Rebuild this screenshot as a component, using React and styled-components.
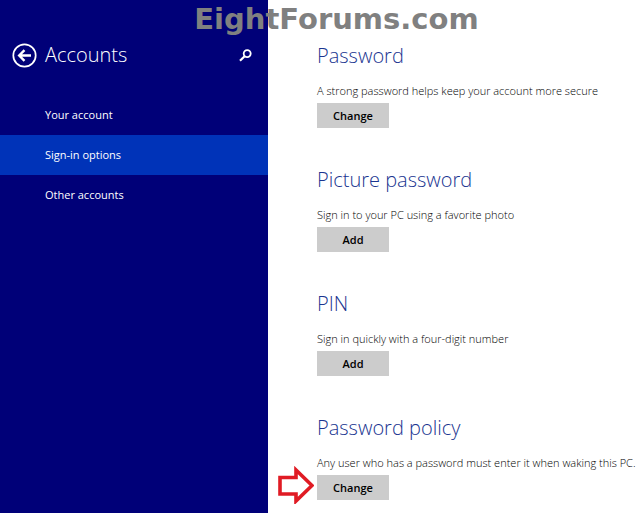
import React from "react";
import { useState } from "react";
import styled, { createGlobalStyle } from "styled-components";


const GlobalStyle = createGlobalStyle`
  * {
    box-sizing: border-box;
  }
  body {
    margin: 0;
    background: #fff;
    font-family: "Open Sans", "Noto Sans", sans-serif;
    font-size: 11px;
  }
`;


const Page = styled.div`
  position: relative;
  display: flex;
  min-height: 100vh;
  overflow: hidden;
`;


const Watermark = styled.div`
  position: absolute;
  top: 0;
  left: 0;
  right: 0;
  padding-left: 32px;
  text-align: center;
  color: #808080;
  font: bold 29px/38px "DejaVu Sans", sans-serif;
  pointer-events: none;
`;


const Sidebar = styled.aside`
  flex: 0 0 268px;
  padding-top: 40px;
  background: #000078;
  color: #fff;
`;


const SidebarHeader = styled.header`
  display: flex;
  align-items: center;
  height: 30px;
  padding: 0 16px 0 12px;
  margin-bottom: 25px;
`;


const IconButton = styled.button`
  display: flex;
  padding: 0;
  border: 0;
  background: none;
  color: #fff;
  cursor: pointer;
`;


const Title = styled.h1`
  flex-grow: 1;
  margin: 0 0 0 8px;
  font-size: 20px;
  font-weight: 300;
  line-height: 30px;
`;


const NavLink = styled.a`
  display: block;
  padding-left: 45px;
  line-height: 40px;
  color: #fff;
  text-decoration: none;
  background: ${(props) => (props.$active ? "#0033b8" : "transparent")};
`;


const Content = styled.main`
  display: flex;
  flex: 1;
  flex-direction: column;
  gap: 38px;
  min-width: 0;
  padding: 42px 0 12px 49px;
`;


const Heading = styled.h2`
  margin: 0 0 12px;
  color: #1a3590;
  font-size: 20px;
  font-weight: 300;
  line-height: 28px;
`;


const Description = styled.p`
  margin: 0 0 3px;
  color: #000;
  font-weight: 300;
  line-height: 18px;
  white-space: nowrap;
`;


const Action = styled.div`
  position: relative;
  display: flex;
`;


const ActionButton = styled.button`
  width: 72px;
  height: 25px;
  padding: 0;
  border: 0;
  background: #ccc;
  color: #000;
  font-family: inherit;
  font-size: 11px;
  font-weight: 600;
  cursor: pointer;
`;


const Pointer = styled.svg`
  position: absolute;
  top: -9px;
  left: -41px;
`;


const pages = ["Your account", "Sign-in options", "Other accounts"];

const options = [
  {
    title: "Password",
    text: "A strong password helps keep your account more secure",
    action: "Change",
  },
  {
    title: "Picture password",
    text: "Sign in to your PC using a favorite photo",
    action: "Add",
  },
  {
    title: "PIN",
    text: "Sign in quickly with a four-digit number",
    action: "Add",
  },
  {
    title: "Password policy",
    text: "Any user who has a password must enter it when waking this PC.",
    action: "Change",
    highlighted: true,
  },
];


function BackIcon() {
  return (
    <svg width="25" height="25" viewBox="0 0 25 25" fill="none" stroke="currentColor">
      <circle cx="12.5" cy="12.5" r="11.2" strokeWidth="1.7" />
      <path d="M19 12.5H8M12.5 7.2L7.2 12.5L12.5 17.8" strokeWidth="2.4" />
    </svg>
  );
}


function SearchIcon() {
  return (
    <svg width="13" height="13" viewBox="0 0 13 13" fill="none" stroke="currentColor">
      <circle cx="8.2" cy="4.6" r="3.5" strokeWidth="1.8" />
      <path d="M5.6 7.2L1 11.8" strokeWidth="2.2" />
    </svg>
  );
}


export default function App() {
  const [activePage, setActivePage] = useState("Sign-in options");
  return (
    <>
      <GlobalStyle />
      <Page>
        <Sidebar>
          <SidebarHeader>
            <IconButton aria-label="Back">
              <BackIcon />
            </IconButton>
            <Title>Accounts</Title>
            <IconButton aria-label="Search">
              <SearchIcon />
            </IconButton>
          </SidebarHeader>
          <nav>
            {pages.map((page) => (
              <NavLink
                key={page}
                href="#"
                $active={page === activePage}
                onClick={() => setActivePage(page)}
              >
                {page}
              </NavLink>
            ))}
          </nav>
        </Sidebar>
        <Content>
          {options.map((option) => (
            <section key={option.title}>
              <Heading>{option.title}</Heading>
              <Description>{option.text}</Description>
              <Action>
                {option.highlighted && (
                  <Pointer width="38" height="38" viewBox="0 0 38 38">
                    <path
                      d="M4 11.5H20V4L36 19.5L20 35V28H4Z"
                      fill="none"
                      stroke="#e01b24"
                      strokeWidth="3.6"
                    />
                  </Pointer>
                )}
                <ActionButton>{option.action}</ActionButton>
              </Action>
            </section>
          ))}
        </Content>
        <Watermark>EightForums.com</Watermark>
      </Page>
    </>
  );
}
